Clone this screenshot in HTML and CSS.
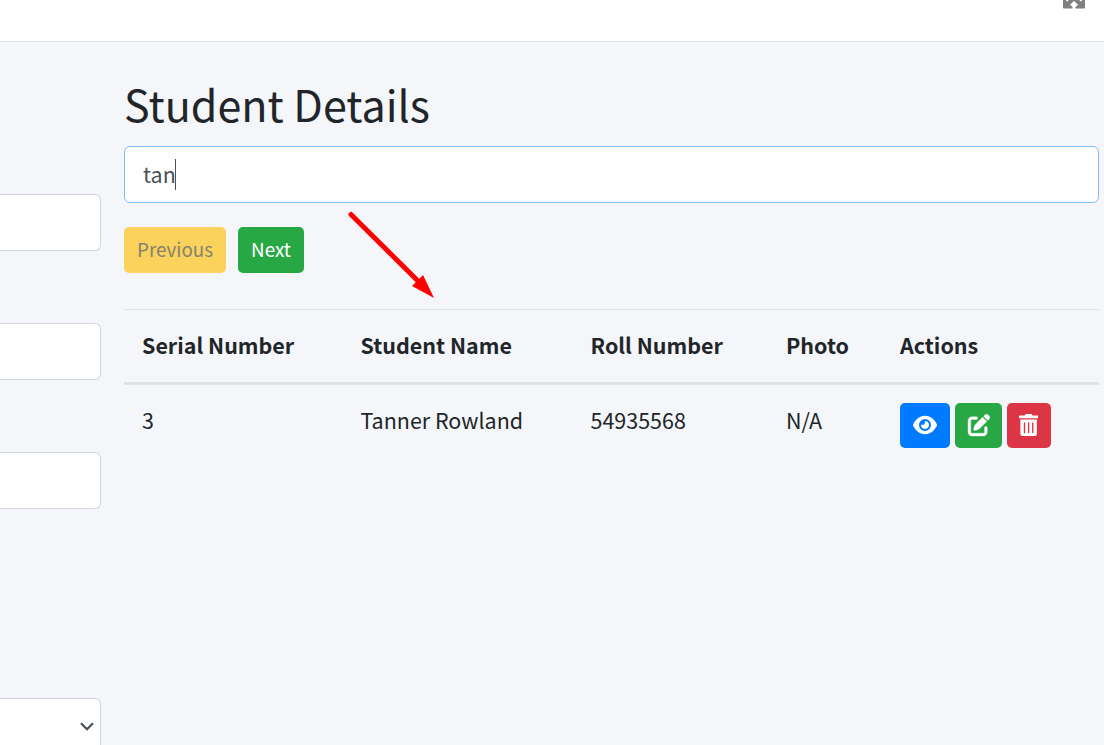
FILE: index.html
```html
<!DOCTYPE html>
<html lang="en">
<head>
<meta charset="utf-8">
<title>Student Details</title>
<link rel="stylesheet" href="styles.css">
</head>
<body>
<header class="topbar">
  <svg class="expand" viewBox="0 0 22 9"><path fill-rule="evenodd" d="M0 0H2.700L4.200 1.700 5.700 0H16.300L17.800 1.700 19.300 0H22V7.700Q22 8.400 21.300 8.400H.7Q0 8.400 0 7.700zM11 1 15 4.700 12.500 7V8.400H9.500V7L7 4.700z"/></svg>
</header>
<div class="content">
  <aside class="form">
    <div class="field"></div>
    <div class="field"></div>
    <div class="field"></div>
    <div class="field select"><svg class="chevron" viewBox="0 0 14 9"><path d="M1 1.200 7 7.200 13 1.200"/></svg></div>
  </aside>
  <main class="details">
    <h1 class="title">Student Details</h1>
    <div class="search"><span class="query">tan</span><span class="caret"></span></div>
    <div class="pager">
      <button class="btn previous" disabled>Previous</button>
      <button class="btn next">Next</button>
    </div>
    <div class="table">
      <div class="row head">
        <span>Serial Number</span><span>Student Name</span><span>Roll Number</span><span>Photo</span><span>Actions</span>
      </div>
      <div class="row">
        <span>3</span><span>Tanner Rowland</span><span>54935568</span><span>N/A</span>
        <div class="actions">
          <button class="action view" aria-label="View"><svg viewBox="0 0 576 512"><path d="M288 32c-80.800 0-145.500 36.800-192.600 80.600C48.600 156 17.300 208 2.500 243.700c-3.300 7.900-3.300 16.700 0 24.600C17.300 304 48.600 356 95.400 399.400C142.500 443.200 207.200 480 288 480s145.500-36.800 192.600-80.600c46.800-43.500 78.100-95.400 93-131.100c3.300-7.900 3.300-16.700 0-24.600c-14.900-35.700-46.200-87.700-93-131.100C433.500 68.800 368.800 32 288 32zM144 256a144 144 0 1 1 288 0 144 144 0 1 1-288 0zm144-64c0 35.300-28.700 64-64 64c-7.100 0-13.900-1.200-20.300-3.300c-5.500-1.800-11.900 1.600-11.700 7.400c.3 6.900 1.300 13.800 3.200 20.700c13.700 51.200 66.400 81.600 117.600 67.900s81.600-66.400 67.900-117.600c-11.100-41.500-47.800-69.400-88.600-71.100c-5.800-.2-9.200 6.100-7.400 11.700c2.100 6.400 3.300 13.200 3.300 20.300z"/></svg></button>
          <button class="action edit" aria-label="Edit"><svg viewBox="0 0 512 512"><path d="M471.600 21.700c-21.900-21.900-57.300-21.900-79.200 0L362.300 51.700l97.900 97.900 30.100-30.100c21.900-21.900 21.900-57.300 0-79.200L471.600 21.700zm-299.200 220c-6.100 6.100-10.800 13.600-13.500 21.900l-29.600 88.800c-2.900 8.600-.6 18.100 5.800 24.600s15.900 8.700 24.600 5.800l88.800-29.600c8.200-2.700 15.700-7.400 21.900-13.500L437.700 172.300 339.700 74.300 172.400 241.700zM96 64C43 64 0 107 0 160V416c0 53 43 96 96 96H352c53 0 96-43 96-96V320c0-17.700-14.300-32-32-32s-32 14.300-32 32v96c0 17.700-14.300 32-32 32H96c-17.700 0-32-14.300-32-32V160c0-17.700 14.300-32 32-32h96c17.700 0 32-14.300 32-32s-14.300-32-32-32H96z"/></svg></button>
          <button class="action delete" aria-label="Delete"><svg viewBox="0 0 448 512"><path d="M32 464a48 48 0 0 0 48 48h288a48 48 0 0 0 48-48V128H32zm272-256a16 16 0 0 1 32 0v224a16 16 0 0 1-32 0zm-96 0a16 16 0 0 1 32 0v224a16 16 0 0 1-32 0zm-96 0a16 16 0 0 1 32 0v224a16 16 0 0 1-32 0zM432 32H312l-9.400-18.700A24 24 0 0 0 281.100 0H166.800a23.720 23.720 0 0 0-21.400 13.300L136 32H16A16 16 0 0 0 0 48v32a16 16 0 0 0 16 16h416a16 16 0 0 0 16-16V48a16 16 0 0 0-16-16z"/></svg></button>
        </div>
      </div>
    </div>
  </main>
</div>
<svg class="pointer" viewBox="0 0 90 92"><path class="shaft" d="M5 5.500 74 74"/><path class="tip" d="M88 89 66 77 77 66z"/></svg>
</body>
</html>
```
FILE: styles.css
```css
* { box-sizing: border-box; }
body {
  margin: 0;
  height: 745px;
  overflow: hidden;
  background: #f4f6f9;
  color: #212529;
  font: 21.48px/34px "Noto Sans CJK JP", "Noto Sans", sans-serif;
}
.topbar {
  display: flex;
  justify-content: flex-end;
  height: 42px;
  padding-right: 19px;
  background: #fff;
  border-bottom: 1px solid #dee2e6;
}
.expand { width: 22px; height: 9px; fill: #7f7f7f; }
.content { display: flex; gap: 23px; height: 703px; }
.form { display: flex; flex-direction: column; gap: 72px; width: 101px; padding-top: 152px; }
.field {
  flex: none;
  height: 57px;
  background: #fff;
  border: 1px solid #ced4da;
  border-left: 0;
  border-radius: 0 6px 6px 0;
}
.select { display: flex; justify-content: flex-end; align-items: center; margin-top: 117px; padding-right: 6px; }
.chevron { width: 14px; height: 9px; fill: none; stroke: #495057; stroke-width: 2.2; }
.details { width: 975px; padding-top: 33px; }
.title { margin: 0 0 14px; font-size: 43px; font-weight: 400; line-height: 57px; }
.search {
  display: flex;
  align-items: center;
  height: 57px;
  padding: 0 18px;
  background: #fff;
  border: 1px solid #80bdff;
  border-radius: 6px;
  color: #495057;
}
.query { padding-bottom: 2px; }
.caret { width: 1px; height: 31px; margin-left: -1px; background: #495057; }
.pager { display: flex; gap: 12px; margin: 24px 0 36px; }
.btn {
  height: 46px;
  padding: 0 0 2px;
  border: 0;
  border-radius: 5px;
  font: 18.8px/44px "Noto Sans CJK JP", "Noto Sans", sans-serif;
}
.previous { width: 102px; background: #fbd25b; color: #84826f; }
.next { width: 66px; background: #28a745; color: #fff; }
.row {
  display: grid;
  grid-template-columns: 218.500px 230px 195.500px 114px 1fr;
  height: 99px;
  padding: 18px 0 0 18px;
}
.head { height: 76px; border-top: 1px solid #dee2e6; border-bottom: 3px solid #dee2e6; font-weight: 700; }
.actions { display: flex; gap: 5px; }
.action {
  display: flex;
  align-items: center;
  justify-content: center;
  width: 50px;
  height: 45px;
  padding: 0 0 1px;
  border: 0;
  border-radius: 5px;
}
.action svg { height: 21px; fill: #fff; }
.view svg { width: 24px; height: 22px; }
.view { background: #007bff; }
.edit { width: 47px; background: #28a745; }
.edit svg { height: 22px; stroke: #fff; stroke-width: 8; overflow: visible; }
.delete { width: 44px; padding-right: 1px; background: #dc3545; }
.delete svg { height: 22px; }
.pointer { position: absolute; left: 345.500px; top: 209px; width: 90px; height: 92px; }
.shaft { stroke: #f00; stroke-width: 5; stroke-linecap: round; }
.tip { fill: #f00; }
```
